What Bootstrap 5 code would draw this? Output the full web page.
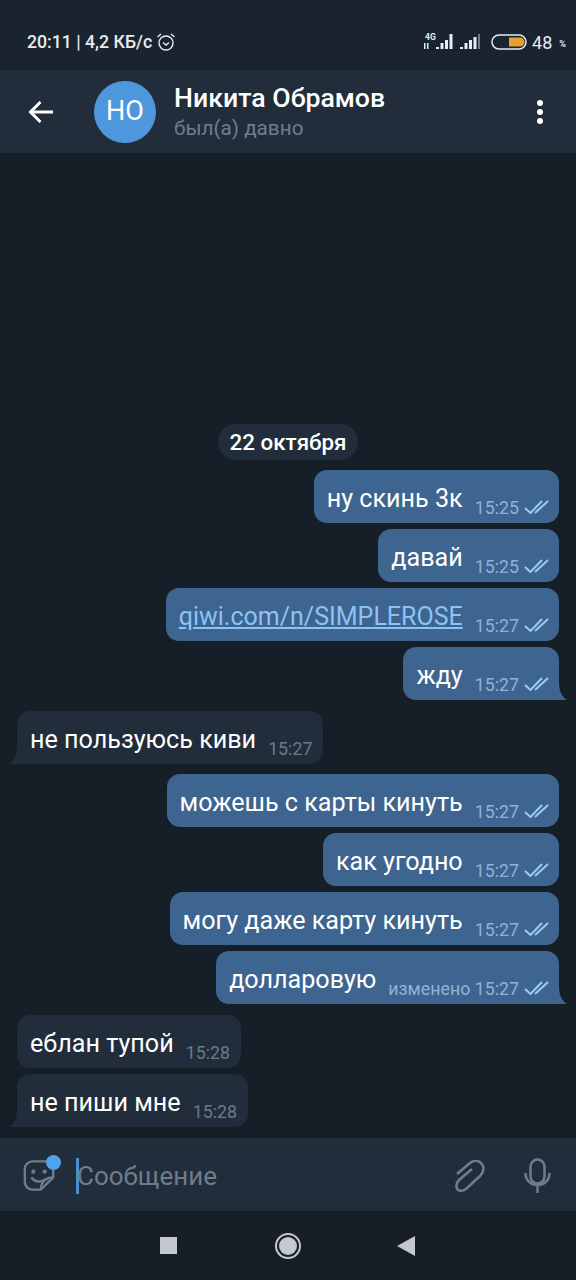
<!doctype html>
<html lang="ru">
<head>
<meta charset="utf-8">
<title>Никита Обрамов</title>
<link href="https://cdn.jsdelivr.net/npm/bootstrap@5.3.2/dist/css/bootstrap.min.css" rel="stylesheet">
<script src="https://cdn.jsdelivr.net/npm/bootstrap@5.3.2/dist/js/bootstrap.bundle.min.js"></script>
<style>
body { background: #161e28; font-family: Roboto, sans-serif; width: 576px; height: 1280px; overflow: hidden; }
.screen { height: 1280px; }
.status-bar { height: 70px; background: #1a2430; color: #e8ebee; padding: 14px 10px 0 27px; }
.status-time { font-size: 17.7px; font-weight: 500; }
.batt-txt { font-size: 18px; margin-left: 5px; }
.batt-pct { font-size: 9px; font-weight: 700; margin-left: 7px; margin-top: 5px; }
.top-bar { height: 83px; background: #212d3b; }
.back-btn { width: 94px; padding-left: 28px; }
.avatar { width: 62px; height: 62px; background: #4f97dd; color: #fff; font-size: 27px; }
.peer-info { margin-left: 18px; padding-top: 3px; }
.peer-name { font-size: 26.7px; font-weight: 500; color: #fff; line-height: 30px; }
.peer-seen { font-size: 20.7px; color: #6e7d8c; line-height: 30px; }
.menu-dots { width: 72px; }
.chat-area { padding: 0 17px 11px 17px; }
.date-pill { background: #212d3b; color: #fff; font-size: 22.4px; font-weight: 500; height: 36px; line-height: 36px; padding: 0 11px; border-radius: 18px; margin-bottom: 10px; }
.bubble { height: 53px; border-radius: 13px; font-size: 25.15px; color: #fff; margin-bottom: 6px; position: relative; }
.bubble-out { background: #3e6490; align-self: flex-end; padding: 0 10px 0 13px; }
.bubble-in { background: #212d3b; align-self: flex-start; padding: 0 11px 0 13px; }
.bubble-out .msg-time { color: #8db4d8; }
.bubble-in .msg-time { color: #6b7a89; }
.msg-text { line-height: 58px; }
.msg-time { font-size: 17.8px; line-height: 18px; margin-left: 12px; margin-top: 29px; white-space: nowrap; }
.msg-link { color: #8cc3f5; font-size: 25px; }
.tail-out { border-bottom-right-radius: 0; }
.tail-out::after { content: ""; position: absolute; right: -8px; bottom: 0; width: 8px; height: 18px; background: #3e6490; clip-path: path("M0 0 C0 9 3 15 8 18 L0 18 Z"); }
.tail-in { border-bottom-left-radius: 0; }
.tail-in::before { content: ""; position: absolute; left: -8px; bottom: 0; width: 8px; height: 18px; background: #212d3b; clip-path: path("M8 0 C8 9 5 15 0 18 L8 18 Z"); }
.after-tail { margin-top: 5px; }
.before-out { margin-bottom: 10px; }
.last-msg { margin-bottom: 0; }
.checks { margin-left: 5px; margin-top: 30px; flex-shrink: 0; }
.input-bar { height: 73px; background: #212d3b; }
.sticker-btn { width: 76px; height: 36px; margin-top: 2px; padding-left: 22px; }
.sticker-dot { width: 15px; height: 15px; background: #4fa3ed; top: -3px; left: 46px; }
.cursor-line { width: 3px; height: 36px; margin-top: 2px; background: #4a90d0; }
.input-hint { font-size: 26px; color: #6e7d8c; margin-left: -2px; padding-top: 3px; }
.clip-icon { margin-right: 39px; margin-top: 3px; }
.mic-icon { margin-right: 25px; margin-top: 2px; }
.nav-strip { height: 69px; background: #161e28; gap: 97px; padding-right: 2px; }
.nav-square { width: 17px; height: 17px; background: #c5c8cc; margin-right: 1px; }
.nav-back { margin-left: -1px; }
</style>
</head>
<body>
<div class="screen d-flex flex-column">
  <div class="status-bar d-flex align-items-center">
    <span class="status-time">20:11 | 4,2 КБ/с</span>
    <svg class="ms-1" width="20" height="20" viewBox="0 0 20 20" fill="none" stroke="#e8ebee" stroke-width="1.4"><circle cx="10" cy="11" r="7"/><path d="M7 10.500l3 2.500 3-2.500M1.500 5L5 2M18.500 5L15 2"/></svg>
    <div class="ms-auto d-flex align-items-center">
      <svg width="60" height="18" viewBox="0 0 60 18" fill="#e8ebee"><text x="2" y="7" font-size="8.500" font-weight="700" font-family="Roboto">4G</text><path d="M1 10h1.500v6H1zM4 10h1.500v6H4z"/><rect x="13" y="14" width="3" height="2"/><rect x="17.500" y="10" width="3" height="6"/><rect x="22" y="7" width="3" height="9"/><rect x="26.500" y="1" width="3" height="15"/><rect x="37" y="14" width="3" height="2"/><rect x="41.500" y="10" width="3" height="6"/><rect x="46" y="7" width="3" height="9"/><rect x="50.500" y="4" width="3" height="12"/><rect x="55" y="1" width="2" height="15" fill="#6e7d8c"/></svg>
      <svg class="ms-2" width="36" height="16" viewBox="0 0 36 16"><rect x="1" y="1" width="34" height="14" rx="7" fill="none" stroke="#e8ebee" stroke-width="1.500"/><path d="M18 3.500h11a4.500 4.500 0 0 1 0 9H18z" fill="#e8a02c"/></svg>
      <span class="batt-txt">48</span>
      <span class="batt-pct">%</span>
    </div>
  </div>

  <div class="top-bar d-flex align-items-center">
    <div class="back-btn">
      <svg class="d-block" width="25" height="24" viewBox="0 0 25 24" fill="none" stroke="#fff" stroke-width="3"><path d="M25 12H3M12.500 2L2.500 12l10 10"/></svg>
    </div>
    <div class="avatar rounded-circle d-flex align-items-center justify-content-center flex-shrink-0">НО</div>
    <div class="peer-info flex-grow-1">
      <div class="peer-name">Никита Обрамов</div>
      <div class="peer-seen">был(а) давно</div>
    </div>
    <div class="menu-dots d-flex flex-column align-items-center">
      <svg width="8" height="26" viewBox="0 0 8 26" fill="#fff"><circle cx="4" cy="4" r="3"/><circle cx="4" cy="13" r="3"/><circle cx="4" cy="22" r="3"/></svg>
    </div>
  </div>

  <div class="chat-area flex-grow-1 d-flex flex-column justify-content-end">
    <div class="align-self-center date-pill">22 октября</div>
    <div class="bubble bubble-out d-flex"><span class="msg-text">ну скинь 3к</span><span class="msg-time">15:25</span><svg class="checks" width="25" height="14" viewBox="0 0 25 14" fill="none" stroke="#9accf3" stroke-width="2"><path d="M1 8l5.500 5L18 1M11 13L24 1"/></svg></div>
    <div class="bubble bubble-out d-flex"><span class="msg-text">давай</span><span class="msg-time">15:25</span><svg class="checks" width="25" height="14" viewBox="0 0 25 14" fill="none" stroke="#9accf3" stroke-width="2"><path d="M1 8l5.500 5L18 1M11 13L24 1"/></svg></div>
    <div class="bubble bubble-out d-flex"><span class="msg-text"><a class="msg-link" href="#">qiwi.com/n/SIMPLEROSE</a></span><span class="msg-time">15:27</span><svg class="checks" width="25" height="14" viewBox="0 0 25 14" fill="none" stroke="#9accf3" stroke-width="2"><path d="M1 8l5.500 5L18 1M11 13L24 1"/></svg></div>
    <div class="bubble bubble-out tail-out d-flex"><span class="msg-text">жду</span><span class="msg-time">15:27</span><svg class="checks" width="25" height="14" viewBox="0 0 25 14" fill="none" stroke="#9accf3" stroke-width="2"><path d="M1 8l5.500 5L18 1M11 13L24 1"/></svg></div>
    <div class="bubble bubble-in tail-in after-tail before-out d-flex"><span class="msg-text">не пользуюсь киви</span><span class="msg-time">15:27</span></div>
    <div class="bubble bubble-out d-flex"><span class="msg-text">можешь с карты кинуть</span><span class="msg-time">15:27</span><svg class="checks" width="25" height="14" viewBox="0 0 25 14" fill="none" stroke="#9accf3" stroke-width="2"><path d="M1 8l5.500 5L18 1M11 13L24 1"/></svg></div>
    <div class="bubble bubble-out d-flex"><span class="msg-text">как угодно</span><span class="msg-time">15:27</span><svg class="checks" width="25" height="14" viewBox="0 0 25 14" fill="none" stroke="#9accf3" stroke-width="2"><path d="M1 8l5.500 5L18 1M11 13L24 1"/></svg></div>
    <div class="bubble bubble-out d-flex"><span class="msg-text">могу даже карту кинуть</span><span class="msg-time">15:27</span><svg class="checks" width="25" height="14" viewBox="0 0 25 14" fill="none" stroke="#9accf3" stroke-width="2"><path d="M1 8l5.500 5L18 1M11 13L24 1"/></svg></div>
    <div class="bubble bubble-out tail-out d-flex"><span class="msg-text">долларовую</span><span class="msg-time">изменено 15:27</span><svg class="checks" width="25" height="14" viewBox="0 0 25 14" fill="none" stroke="#9accf3" stroke-width="2"><path d="M1 8l5.500 5L18 1M11 13L24 1"/></svg></div>
    <div class="bubble bubble-in after-tail d-flex"><span class="msg-text">еблан тупой</span><span class="msg-time">15:28</span></div>
    <div class="bubble bubble-in tail-in last-msg d-flex"><span class="msg-text">не пиши мне</span><span class="msg-time">15:28</span></div>
  </div>

  <div class="input-bar d-flex align-items-center">
    <div class="sticker-btn position-relative flex-shrink-0">
      <svg class="d-block" width="34" height="35" viewBox="0 0 36 36" fill="none" stroke="#6e7d8c" stroke-width="2.500"><path d="M11 3h14a8 8 0 0 1 8 8v9L20 33h-9a8 8 0 0 1-8-8V11a8 8 0 0 1 8-8z"/><path d="M10 20c3 5 10 6 15 2M33 20c-7 0-13 4-13 13"/><circle cx="12" cy="14" r="1"/><circle cx="24" cy="14" r="1"/></svg>
      <span class="position-absolute rounded-circle sticker-dot"></span>
    </div>
    <div class="cursor-line flex-shrink-0"></div>
    <div class="input-hint flex-grow-1">Сообщение</div>
    <svg class="clip-icon flex-shrink-0" width="30" height="33" viewBox="0 0 30 33" fill="none" stroke="#6e7d8c" stroke-width="2.500"><path d="M2 14L15 3C20-1 26 1 28 6C29 10 28 13 25 16L11 29C7 32 2 31 1.500 27C1 24 2 22 4 20L17 9"/></svg>
    <svg class="mic-icon flex-shrink-0" width="27" height="36" viewBox="0 0 27 36" fill="none" stroke="#6e7d8c" stroke-width="2.500"><rect x="6.500" y="1.500" width="14" height="24" rx="7"/><path d="M1.500 15c0 16 24 16 24 0M13.500 28v7"/></svg>
  </div>

  <div class="nav-strip d-flex align-items-center justify-content-center">
    <div class="nav-square"></div>
    <svg width="26" height="26" viewBox="0 0 26 26"><circle cx="13" cy="13" r="12" fill="none" stroke="#c5c8cc" stroke-width="2"/><circle cx="13" cy="13" r="9" fill="#c5c8cc"/></svg>
    <svg class="nav-back" width="18" height="20" viewBox="0 0 18 20"><path d="M18 0v20L0 10z" fill="#c5c8cc"/></svg>
  </div>
</div>
</body>
</html>
